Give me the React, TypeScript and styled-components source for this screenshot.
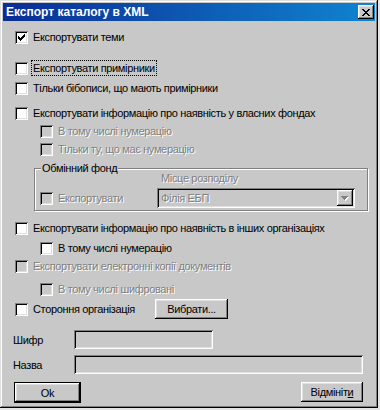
import React from "react";
import styled, { createGlobalStyle, css } from "styled-components";

const face = "#c8c8c8";

const GlobalStyle = createGlobalStyle`
  html, body {
    margin: 0;
    padding: 0;
    background: #e4e4e4;
  }
  body {
    font-family: "Liberation Sans", Arial, sans-serif;
    font-size: 11px;
    letter-spacing: -0.35px;
    color: #000;
  }
  * {
    box-sizing: border-box;
  }
`;

const raised = css`
  box-shadow: inset -1px -1px 0 #000, inset 1px 1px 0 #fff,
    inset -2px -2px 0 #808080, inset 2px 2px 0 #dfdfdf;
`;

const sunken = css`
  box-shadow: inset 1px 1px 0 #808080, inset -1px -1px 0 #fff,
    inset 2px 2px 0 #000, inset -2px -2px 0 #dfdfdf;
`;

const disabledText = css`
  color: #808080;
  text-shadow: 1px 1px 0 #fff;
`;

const Window = styled.div`
  width: 378px;
  height: 408px;
  padding: 3px;
  background: ${face};
  display: flex;
  flex-direction: column;
  box-shadow: inset -1px -1px 0 #000, inset 1px 1px 0 #dfdfdf,
    inset -2px -2px 0 #808080, inset 2px 2px 0 #fff;
`;

const TitleBar = styled.div`
  height: 18px;
  display: flex;
  align-items: center;
  justify-content: space-between;
  padding: 0 1px 0 3px;
  background: linear-gradient(to right, #0a2d96, #1084d0);
  color: #fff;
  font-weight: bold;
  font-size: 12px;
  letter-spacing: 0;
`;

const CloseButton = styled.div`
  width: 16px;
  height: 14px;
  background: ${face};
  display: flex;
  align-items: center;
  justify-content: center;
  ${raised};
`;

const Body = styled.div`
  display: flex;
  flex-direction: column;
  padding: 0 12px;
`;

const Row = styled.div<{ $mt: number; $indent?: number; $h?: number }>`
  display: flex;
  align-items: center;
  height: ${(p) => p.$h ?? 16}px;
  margin-top: ${(p) => p.$mt}px;
  padding-left: ${(p) => p.$indent ?? 0}px;
`;

const Box = styled.span<{ $disabled?: boolean }>`
  width: 13px;
  height: 13px;
  flex-shrink: 0;
  padding: 3px;
  display: flex;
  background: ${(p) => (p.$disabled ? face : "#fff")};
  ${sunken};
`;

const Label = styled.span<{ $disabled?: boolean; $focus?: boolean; $w?: number }>`
  margin-left: 3px;
  padding: 0 1px;
  line-height: 14px;
  white-space: nowrap;
  border: 1px dotted ${(p) => (p.$focus ? "#000" : "transparent")};
  ${(p) => p.$w && `width: ${p.$w}px;`}
  ${(p) => p.$disabled && disabledText};
`;

const Group = styled.div`
  position: relative;
  width: 334px;
  height: 43px;
  margin: 11px 0 0 19px;
  padding: 2px 0 2px 5px;
  border: 1px solid #808080;
  box-shadow: inset 1px 1px 0 #fff, 1px 1px 0 #fff;
  display: flex;
  align-items: flex-end;
`;

const Legend = styled.span`
  position: absolute;
  top: -8px;
  left: 6px;
  padding: 0 1px;
  line-height: 14px;
  background: ${face};
`;

const GroupLeft = styled.div`
  width: 117px;
  height: 20px;
  display: flex;
  align-items: center;
`;

const GroupRight = styled.div`
  display: flex;
  flex-direction: column;
`;

const SmallCaption = styled.span`
  height: 14px;
  line-height: 14px;
  margin-left: 4px;
  margin-bottom: 3px;
  ${disabledText};
`;

const Combo = styled.div`
  width: 198px;
  height: 20px;
  padding: 2px;
  display: flex;
  align-items: center;
  justify-content: space-between;
  background: ${face};
  ${sunken};
`;

const ComboText = styled.span`
  padding-left: 2px;
  ${disabledText};
`;

const DropButton = styled.span`
  width: 16px;
  height: 16px;
  display: flex;
  align-items: center;
  justify-content: center;
  background: ${face};
  ${raised};
`;

const Button = styled.div<{ $w: number; $h?: number }>`
  width: ${(p) => p.$w}px;
  height: ${(p) => p.$h ?? 20}px;
  display: flex;
  align-items: center;
  justify-content: center;
  background: ${face};
  ${raised};
`;

const DefaultButton = styled.div<{ $w: number }>`
  width: ${(p) => p.$w}px;
  height: 21px;
  border: 1px solid #000;
  display: flex;
  align-items: center;
  justify-content: center;
  background: ${face};
  ${raised};
`;

const FieldRow = styled.div<{ $mt: number }>`
  display: flex;
  align-items: center;
  margin: ${(p) => p.$mt}px 0 0 -2px;
`;

const FieldLabel = styled.span`
  width: 61px;
`;

const Field = styled.div<{ $w: number }>`
  width: ${(p) => p.$w}px;
  height: 19px;
  background: ${face};
  ${sunken};
`;

const ButtonRow = styled.div`
  display: flex;
  justify-content: space-between;
  align-items: flex-start;
  margin: 8px 0 0 -1px;
`;

const CheckMark = () => (
  <svg width="7" height="7" viewBox="0 0 7 7" shapeRendering="crispEdges">
    <path
      d="M0 2h1v3h-1z M1 3h1v3h-1z M2 4h1v3h-1z M3 3h1v3h-1z M4 2h1v3h-1z M5 1h1v3h-1z M6 0h1v3h-1z"
      fill="#000"
    />
  </svg>
);

const CloseGlyph = () => (
  <svg width="8" height="7" viewBox="0 0 8 7" shapeRendering="crispEdges">
    <path
      d="M0 0h2v1h-2z M6 0h2v1h-2z M1 1h2v1h-2z M5 1h2v1h-2z M2 2h4v1h-4z M3 3h2v1h-2z M2 4h4v1h-4z M1 5h2v1h-2z M5 5h2v1h-2z M0 6h2v1h-2z M6 6h2v1h-2z"
      fill="#000"
    />
  </svg>
);

const Arrow = () => (
  <svg width="8" height="5" viewBox="0 0 8 5" shapeRendering="crispEdges">
    <path d="M1 1h7v1h-1v1h-1v1h-1v1h-1v-1h-1v-1h-1v-1h-1z" fill="#fff" />
    <path d="M0 0h7v1h-1v1h-1v1h-1v1h-1v-1h-1v-1h-1v-1h-1z" fill="#808080" />
  </svg>
);

interface CheckProps {
  label: string;
  checked?: boolean;
  disabled?: boolean;
  focus?: boolean;
  w?: number;
}

const Check = ({ label, checked, disabled, focus, w }: CheckProps) => (
  <>
    <Box $disabled={disabled}>{checked && <CheckMark />}</Box>
    <Label $disabled={disabled} $focus={focus} $w={w}>
      {label}
    </Label>
  </>
);

const App: React.FunctionComponent = () => {
  return (
    <>
      <GlobalStyle />
      <Window>
        <TitleBar>
          <span>Експорт каталогу в XML</span>
          <CloseButton>
            <CloseGlyph />
          </CloseButton>
        </TitleBar>
        <Body>
          <Row $mt={8}>
            <Check label="Експортувати теми" checked />
          </Row>
          <Row $mt={15}>
            <Check label="Експортувати примірники" focus />
          </Row>
          <Row $mt={4}>
            <Check label="Тільки бібописи, що мають примірники" />
          </Row>
          <Row $mt={9}>
            <Check label="Експортувати інформацію про наявність у власних фондах" />
          </Row>
          <Row $mt={2} $indent={25}>
            <Check label="В тому числі нумерацію" disabled />
          </Row>
          <Row $mt={2} $indent={25}>
            <Check label="Тільки ту, що має нумерацію" disabled />
          </Row>

          <Group>
            <Legend>Обмінний фонд</Legend>
            <GroupLeft>
              <Check label="Експортувати" disabled />
            </GroupLeft>
            <GroupRight>
              <SmallCaption>Місце розподілу</SmallCaption>
              <Combo>
                <ComboText>Філія ЕБП</ComboText>
                <DropButton>
                  <Arrow />
                </DropButton>
              </Combo>
            </GroupRight>
          </Group>

          <Row $mt={9}>
            <Check label="Експортувати інформацію про наявність в інших організаціях" />
          </Row>
          <Row $mt={4} $indent={25}>
            <Check label="В тому числі нумерацію" />
          </Row>
          <Row $mt={2}>
            <Check label="Експортувати електронні копії документів" disabled />
          </Row>
          <Row $mt={7} $indent={25}>
            <Check label="В тому числі шифровані" disabled />
          </Row>
          <Row $mt={2} $h={20}>
            <Check label="Стороння організація" w={124} />
            <Button $w={73}>Вибрати...</Button>
          </Row>

          <FieldRow $mt={11}>
            <FieldLabel>Шифр</FieldLabel>
            <Field $w={139} />
          </FieldRow>
          <FieldRow $mt={6}>
            <FieldLabel>Назва</FieldLabel>
            <Field $w={290} />
          </FieldRow>

          <ButtonRow>
            <DefaultButton $w={67}>Ok</DefaultButton>
            <Button $w={62}>
              <span>
                Відмініт<u>и</u>
              </span>
            </Button>
          </ButtonRow>
        </Body>
      </Window>
    </>
  );
};

export default App;
